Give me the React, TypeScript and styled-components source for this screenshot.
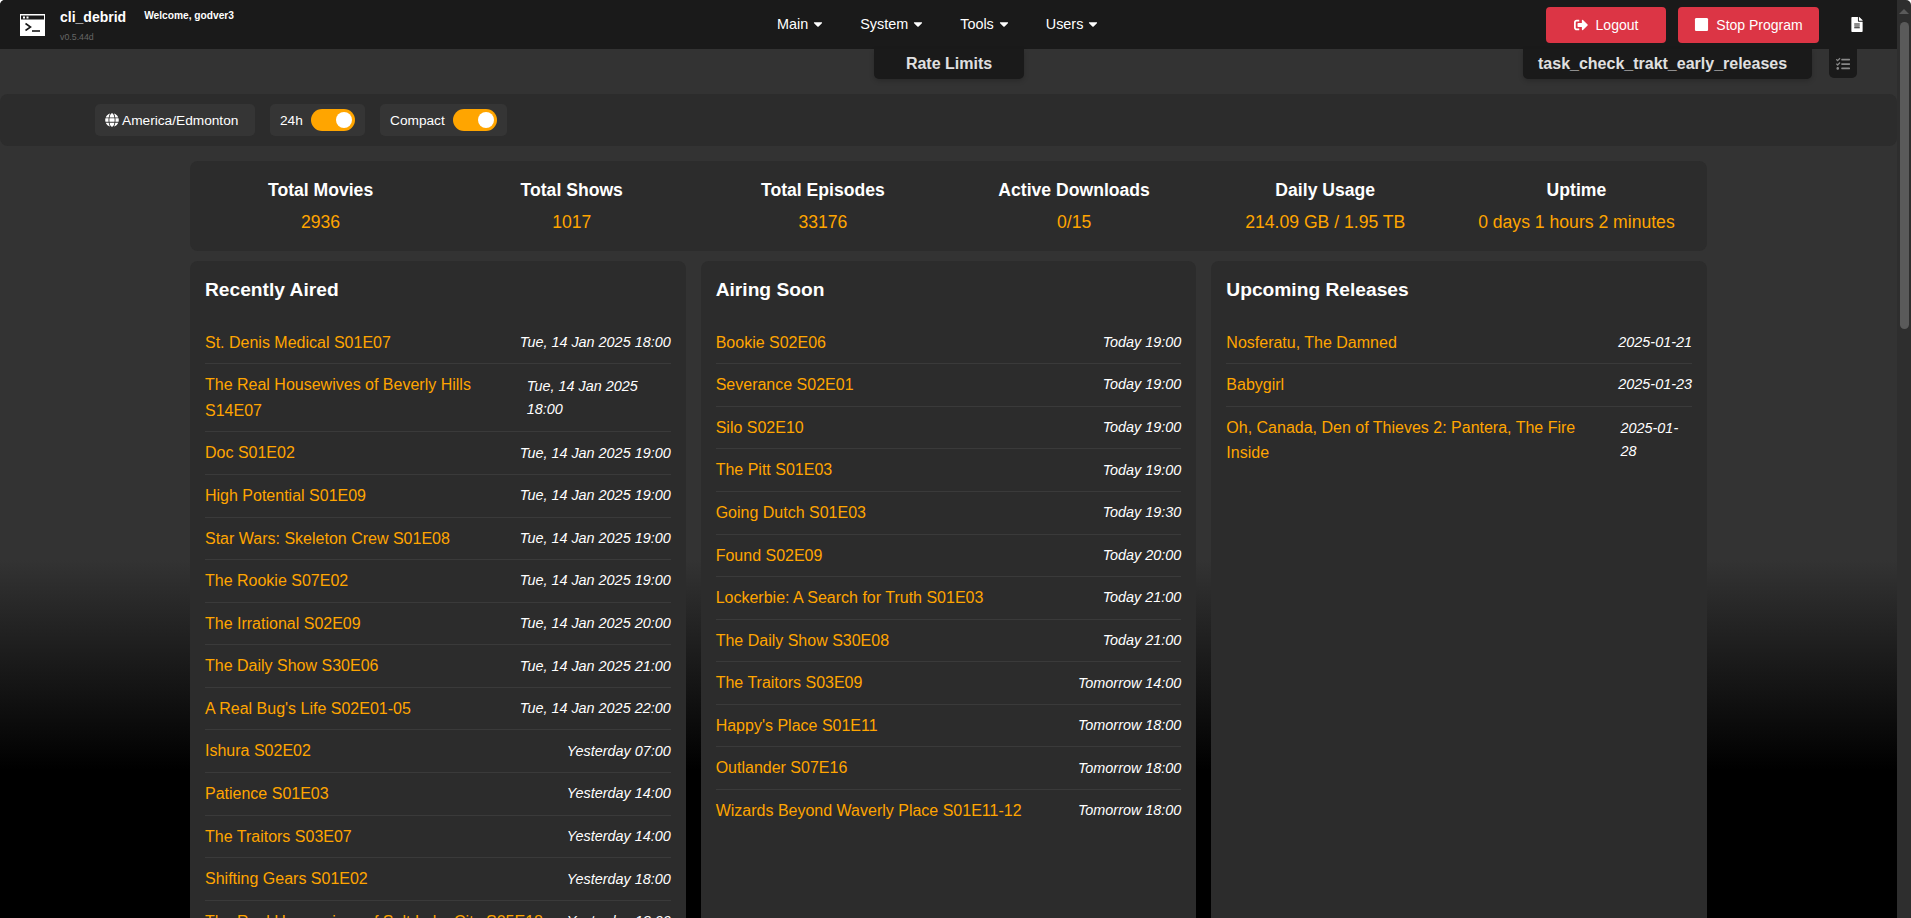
import React from "react";
import styled, { createGlobalStyle } from "styled-components";
import { FaCaretDown, FaSignOutAlt, FaStop, FaFileAlt, FaTasks, FaGlobe } from "react-icons/fa";

const Global = createGlobalStyle`
  html, body { margin: 0; padding: 0; height: 100%; overflow: hidden; background: #fff; }
  #root { height: 100%; }
  * { box-sizing: border-box; }
`;

const Shell = styled.div`
  display: flex;
  height: 918px;
  overflow: hidden;
  border-radius: 5px 5px 0 0;
  font-family: "Liberation Sans", Arial, sans-serif;
  color: #f4f4f4;
`;

const Page = styled.div`
  position: relative;
  flex: 1;
  min-width: 0;
  overflow: hidden;
  background: linear-gradient(to bottom, #333 0, #333 560px, #000 770px);
`;

const Header = styled.header`
  position: relative;
  display: flex;
  align-items: center;
  height: 49px;
  background: #1a1a1a;
  padding-left: 20px;
`;

const Brand = styled.div`
  display: flex;
  align-items: center;
  gap: 15px;
  width: 757px;
`;

const BrandText = styled.div`
  display: flex;
  flex-direction: column;
  align-self: flex-start;
  color: #fff;
`;

const BrandLine = styled.div`
  display: flex;
  align-items: flex-start;
  gap: 18px;
`;

const BrandName = styled.span`
  font-size: 14px;
  font-weight: 700;
  line-height: 20px;
`;

const Welcome = styled.span`
  font-size: 10.2px;
  font-weight: 700;
  line-height: 14px;
  margin-top: 2.5px;
`;

const Version = styled.span`
  font-size: 8.8px;
  line-height: 12px;
  margin-top: 4px;
  color: #666;
`;

const Nav = styled.nav`
  display: flex;
  gap: 37px;
  align-items: center;
  margin-bottom: 2px;
`;

const NavItem = styled.span`
  display: inline-flex;
  align-items: center;
  gap: 5px;
  font-size: 14.4px;
  color: #fff;
  svg { width: 10px; height: 14px; }
`;

const HeaderRight = styled.div`
  margin-left: auto;
  display: flex;
  align-items: center;
  gap: 12px;
  padding-right: 34px;
`;

const DangerButton = styled.button<{ $w: number }>`
  display: inline-flex;
  align-items: center;
  justify-content: center;
  gap: 8px;
  width: ${(p) => p.$w}px;
  height: 36px;
  border: 0;
  border-radius: 4px;
  background: #dc3545;
  color: #fff;
  font-family: inherit;
  font-size: 14px;
  padding: 0;
  svg { width: 14px; height: 14px; }
`;

const StopButton = styled(DangerButton)`
  gap: 7px;
  svg { width: 15px; height: 15px; }
`;

const FileButton = styled.span`
  display: inline-flex;
  margin-left: 20px;
  color: #fff;
  svg { width: 12px; height: 15px; }
`;

const Tab = styled.div<{ $left: number; $w: number }>`
  position: absolute;
  top: 49px;
  left: ${(p) => p.$left}px;
  width: ${(p) => p.$w}px;
  height: 30px;
  display: flex;
  align-items: center;
  justify-content: center;
  background: #1a1a1a;
  border-radius: 0 0 5px 5px;
  font-size: 16px;
  font-weight: 700;
  color: #e0e0e0;
  box-shadow: 0 2px 5px rgba(0, 0, 0, 0.2);
`;

const TaskTab = styled(Tab)`
  justify-content: flex-start;
  padding-left: 15px;
`;

const TaskToggle = styled.div`
  position: absolute;
  top: 49px;
  left: 1829px;
  width: 28px;
  height: 29px;
  display: flex;
  align-items: center;
  justify-content: center;
  background: #1a1a1a;
  border-radius: 0 0 5px 5px;
  color: #888;
  svg { width: 14px; height: 14px; }
`;

const Toolbar = styled.div`
  display: flex;
  align-items: center;
  gap: 15px;
  height: 52px;
  margin-top: 45px;
  padding-left: 95px;
  background: #2c2c2c;
  border-radius: 8px;
`;

const Pill = styled.div<{ $w: number }>`
  display: flex;
  align-items: center;
  gap: 8px;
  width: ${(p) => p.$w}px;
  height: 32px;
  padding-left: 10px;
  background: #353535;
  border-radius: 5px;
  font-size: 13.7px;
  color: #fff;
`;

const GlobePill = styled(Pill)`
  gap: 3px;
  svg { flex: none; width: 14px; height: 14px; }
`;

const Toggle = styled.span`
  display: flex;
  align-items: center;
  justify-content: flex-end;
  flex: none;
  width: 44px;
  height: 22px;
  padding-right: 3px;
  border-radius: 11px;
  background: #ffa500;
`;

const Knob = styled.span`
  display: block;
  width: 16px;
  height: 16px;
  border-radius: 50%;
  background: #fff;
`;

const Content = styled.main`
  width: 1517px;
  margin: 15px auto 0;
`;

const Stats = styled.section`
  display: grid;
  grid-template-columns: repeat(6, 1fr);
  padding: 15px 5px;
  background: #2c2c2c;
  border-radius: 8px;
  text-align: center;
`;

const StatLabel = styled.div`
  font-size: 17.6px;
  font-weight: 700;
  line-height: 28.16px;
  color: #fff;
  margin-bottom: 4px;
`;

const StatValue = styled.div`
  font-size: 17.6px;
  line-height: 28.16px;
  color: #ffa500;
`;

const Columns = styled.div`
  display: grid;
  grid-template-columns: repeat(3, 1fr);
  gap: 15px;
  margin-top: 9.5px;
`;

const Panel = styled.section`
  padding: 14px 15px 15px;
  background: #2c2c2c;
  border-radius: 8px;
`;

const PanelTitle = styled.h2`
  margin: 0 0 16px;
  font-size: 19.2px;
  font-weight: 700;
  line-height: 30.72px;
  color: #fff;
`;

const List = styled.ul`
  margin: 0;
  padding: 0;
  list-style: none;
`;

const Row = styled.li`
  display: flex;
  align-items: center;
  justify-content: space-between;
  padding: 8px 0;
  border-bottom: 1px solid #3a3a3a;
  font-size: 16px;
  line-height: 25.6px;
  &:last-child { border-bottom: 0; }
`;

const RowTitle = styled.span`
  color: #ffa500;
`;

const RowDate = styled.span`
  margin-left: 10px;
  font-size: 14.4px;
  line-height: 23.04px;
  font-style: italic;
  color: #fff;
`;

const Scrollbar = styled.aside`
  display: flex;
  flex-direction: column;
  align-items: center;
  width: 14px;
  height: 918px;
  background: #2e2e2e;
`;

const ScrollArrow = styled.span`
  width: 0;
  height: 0;
  margin-top: 9px;
  border-left: 5px solid transparent;
  border-right: 5px solid transparent;
  border-bottom: 5px solid #5a5a5a;
`;

const ScrollThumb = styled.span`
  width: 9px;
  height: 307px;
  margin-top: 8px;
  border-radius: 5px;
  background: #5a5a5a;
`;

const Logo = () => (
  <svg width="25" height="22" viewBox="0 0 25 22" aria-hidden="true">
    <rect x="0" y="0" width="25" height="22" fill="#fff" />
    <rect x="1" y="1.5" width="23" height="4" fill="#1a1a1a" />
    <rect x="3" y="2.5" width="2" height="2" fill="#fff" />
    <rect x="6.5" y="2.5" width="2" height="2" fill="#fff" />
    <path d="M5.5 9.5l5 3.5-5 3.5" fill="none" stroke="#1a1a1a" strokeWidth="1.6" />
    <rect x="12" y="16.2" width="8" height="1.6" fill="#1a1a1a" />
  </svg>
);

const stats = [
  ["Total Movies", "2936"],
  ["Total Shows", "1017"],
  ["Total Episodes", "33176"],
  ["Active Downloads", "0/15"],
  ["Daily Usage", "214.09 GB / 1.95 TB"],
  ["Uptime", "0 days 1 hours 2 minutes"],
];

const recent = [
  ["St. Denis Medical S01E07", "Tue, 14 Jan 2025 18:00"],
  ["The Real Housewives of Beverly Hills S14E07", "Tue, 14 Jan 2025 18:00"],
  ["Doc S01E02", "Tue, 14 Jan 2025 19:00"],
  ["High Potential S01E09", "Tue, 14 Jan 2025 19:00"],
  ["Star Wars: Skeleton Crew S01E08", "Tue, 14 Jan 2025 19:00"],
  ["The Rookie S07E02", "Tue, 14 Jan 2025 19:00"],
  ["The Irrational S02E09", "Tue, 14 Jan 2025 20:00"],
  ["The Daily Show S30E06", "Tue, 14 Jan 2025 21:00"],
  ["A Real Bug's Life S02E01-05", "Tue, 14 Jan 2025 22:00"],
  ["Ishura S02E02", "Yesterday 07:00"],
  ["Patience S01E03", "Yesterday 14:00"],
  ["The Traitors S03E07", "Yesterday 14:00"],
  ["Shifting Gears S01E02", "Yesterday 18:00"],
  ["The Real Housewives of Salt Lake City S05E18", "Yesterday 18:00"],
];

const soon = [
  ["Bookie S02E06", "Today 19:00"],
  ["Severance S02E01", "Today 19:00"],
  ["Silo S02E10", "Today 19:00"],
  ["The Pitt S01E03", "Today 19:00"],
  ["Going Dutch S01E03", "Today 19:30"],
  ["Found S02E09", "Today 20:00"],
  ["Lockerbie: A Search for Truth S01E03", "Today 21:00"],
  ["The Daily Show S30E08", "Today 21:00"],
  ["The Traitors S03E09", "Tomorrow 14:00"],
  ["Happy's Place S01E11", "Tomorrow 18:00"],
  ["Outlander S07E16", "Tomorrow 18:00"],
  ["Wizards Beyond Waverly Place S01E11-12", "Tomorrow 18:00"],
];

const upcoming = [
  ["Nosferatu, The Damned", "2025-01-21"],
  ["Babygirl", "2025-01-23"],
  ["Oh, Canada, Den of Thieves 2: Pantera, The Fire Inside", "2025-01-28"],
];

const panels: [string, string[][]][] = [
  ["Recently Aired", recent],
  ["Airing Soon", soon],
  ["Upcoming Releases", upcoming],
];

export default function App() {
  return (
    <>
      <Global />
      <Shell>
        <Page>
          <Header>
            <Brand>
              <Logo />
              <BrandText>
                <BrandLine>
                  <BrandName>cli_debrid</BrandName>
                  <Welcome>Welcome, godver3</Welcome>
                </BrandLine>
                <Version>v0.5.44d</Version>
              </BrandText>
            </Brand>
            <Nav>
              {["Main", "System", "Tools", "Users"].map((n) => (
                <NavItem key={n}>
                  {n}
                  <FaCaretDown />
                </NavItem>
              ))}
            </Nav>
            <HeaderRight>
              <DangerButton $w={120}>
                <FaSignOutAlt />
                Logout
              </DangerButton>
              <StopButton $w={141}>
                <FaStop />
                Stop Program
              </StopButton>
              <FileButton>
                <FaFileAlt />
              </FileButton>
            </HeaderRight>
            <Tab $left={874} $w={150}>Rate Limits</Tab>
            <TaskTab $left={1523} $w={289}>task_check_trakt_early_releases</TaskTab>
            <TaskToggle>
              <FaTasks />
            </TaskToggle>
          </Header>
          <Toolbar>
            <GlobePill $w={160}>
              <FaGlobe />
              America/Edmonton
            </GlobePill>
            <Pill $w={95}>
              24h
              <Toggle><Knob /></Toggle>
            </Pill>
            <Pill $w={127}>
              Compact
              <Toggle><Knob /></Toggle>
            </Pill>
          </Toolbar>
          <Content>
            <Stats>
              {stats.map(([l, v]) => (
                <div key={l}>
                  <StatLabel>{l}</StatLabel>
                  <StatValue>{v}</StatValue>
                </div>
              ))}
            </Stats>
            <Columns>
              {panels.map(([title, rows]) => (
                <Panel key={title}>
                  <PanelTitle>{title}</PanelTitle>
                  <List>
                    {rows.map(([t, d]) => (
                      <Row key={t}>
                        <RowTitle>{t}</RowTitle>
                        <RowDate>{d}</RowDate>
                      </Row>
                    ))}
                  </List>
                </Panel>
              ))}
            </Columns>
          </Content>
        </Page>
        <Scrollbar>
          <ScrollArrow />
          <ScrollThumb />
        </Scrollbar>
      </Shell>
    </>
  );
}
